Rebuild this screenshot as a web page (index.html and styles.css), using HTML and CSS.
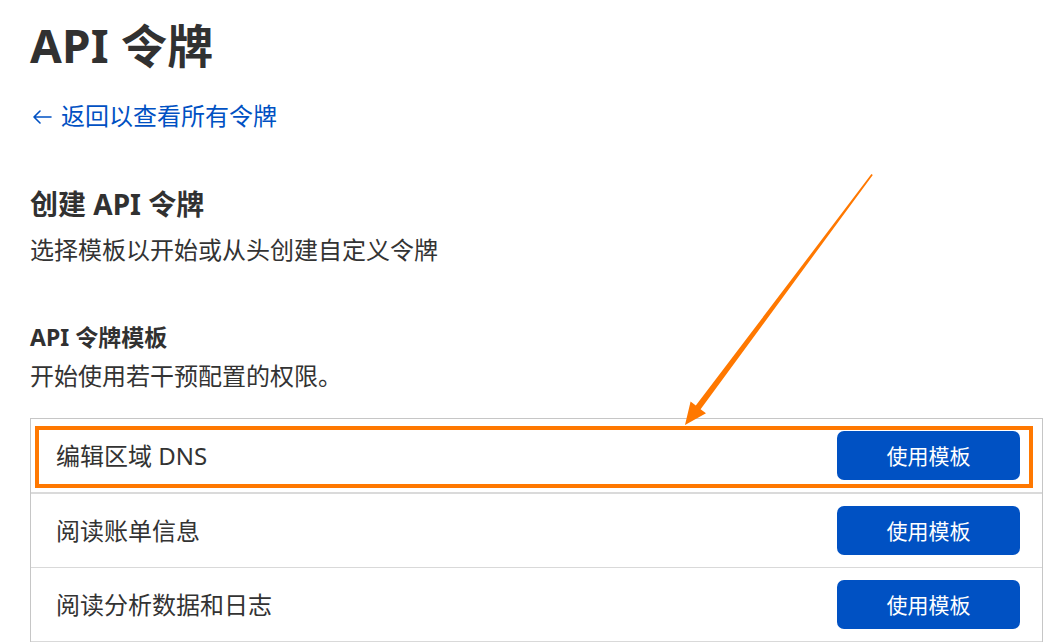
FILE: index.html
```html
<!DOCTYPE html>
<html lang="zh-CN">
<head>
<meta charset="utf-8">
<title>API 令牌</title>
<link rel="stylesheet" href="styles.css">
</head>
<body>
<main class="page">
  <h1 class="title">API 令牌</h1>
  <a class="back" href="#">
    <svg class="back-icon" width="20" height="14" viewBox="0 0 20 14" aria-hidden="true">
      <path d="M19 7H2M8 1L2 7l6 6" fill="none" stroke="#0051c3" stroke-width="1.6" stroke-linecap="round" stroke-linejoin="round"/>
    </svg>
    <span>返回以查看所有令牌</span>
  </a>

  <h2 class="section-title">创建 API 令牌</h2>
  <p class="section-desc">选择模板以开始或从头创建自定义令牌</p>

  <h3 class="sub-title">API 令牌模板</h3>
  <p class="sub-desc">开始使用若干预配置的权限。</p>

  <div class="templates">
    <div class="row row-first row-highlight">
      <span class="row-name">编辑区域 DNS</span>
      <button class="btn">使用模板</button>
    </div>
    <div class="row">
      <span class="row-name">阅读账单信息</span>
      <button class="btn">使用模板</button>
    </div>
    <div class="row">
      <span class="row-name">阅读分析数据和日志</span>
      <button class="btn">使用模板</button>
    </div>
  </div>

  <svg class="annot-arrow" width="1060" height="642" viewBox="0 0 1060 642" aria-hidden="true">
    <polygon fill="#ff7800" points="872.8,174.9 700.6,409.2 706,413.2 685,425 690.6,401.6 695.8,405.6 871.4,174.1"/>
  </svg>
</main>
</body>
</html>
```

FILE: styles.css
```css
* { box-sizing: border-box; }

html, body {
  margin: 0;
  padding: 0;
  background: #ffffff;
}

body {
  font-family: "Noto Sans", "Noto Sans CJK SC", sans-serif;
  color: #333333;
  overflow: hidden;
}

.page {
  position: relative;
  width: 1060px;
  height: 642px;
  padding: 17px 17px 0 30px;
  display: flex;
  flex-direction: column;
  align-items: flex-start;
}

.title {
  margin: 0;
  font-size: 46px;
  line-height: 56px;
  font-weight: 700;
  color: #313131;
  letter-spacing: 0.2px;
}

.back {
  margin-top: 27px;
  display: flex;
  align-items: center;
  gap: 9px;
  font-size: 24px;
  line-height: 32px;
  color: #0051c3;
  text-decoration: none;
}

.back-icon {
  margin-left: 2px;
  margin-top: 1px;
}

.section-title {
  margin: 54px 0 0;
  font-size: 28px;
  line-height: 36px;
  font-weight: 700;
  color: #313131;
}

.section-desc {
  margin: 12px 0 0;
  font-size: 24px;
  line-height: 32px;
}

.sub-title {
  margin: 56px 0 0;
  font-size: 23px;
  line-height: 30px;
  font-weight: 700;
  color: #313131;
}

.sub-desc {
  margin: 8px 0 0;
  font-size: 24px;
  line-height: 32px;
}

.templates {
  margin-top: 26px;
  width: 1013px;
  border: 1px solid #c6c6c6;
  border-bottom: none;
  display: flex;
  flex-direction: column;
}

.row {
  position: relative;
  display: flex;
  align-items: center;
  justify-content: space-between;
  padding: 12px 22px 12px 25px;
  border-bottom: 1px solid #d9d9d9;
}

.row-first {
  border-bottom: 2px solid #dadada;
}

.row-highlight::after {
  content: "";
  position: absolute;
  top: 7px;
  left: 4px;
  right: 9px;
  bottom: 4px;
  border: 4px solid #ff7800;
  pointer-events: none;
}

.row-name {
  font-size: 24px;
  line-height: 32px;
  color: #333333;
}

.btn {
  width: 183px;
  height: 49px;
  border: none;
  border-radius: 7px;
  background: #0051c3;
  color: #ffffff;
  font-family: "Noto Sans", "Noto Sans CJK SC", sans-serif;
  font-size: 21px;
  line-height: 28px;
  cursor: pointer;
}

.annot-arrow {
  position: absolute;
  left: 0;
  top: 0;
  pointer-events: none;
}
```
